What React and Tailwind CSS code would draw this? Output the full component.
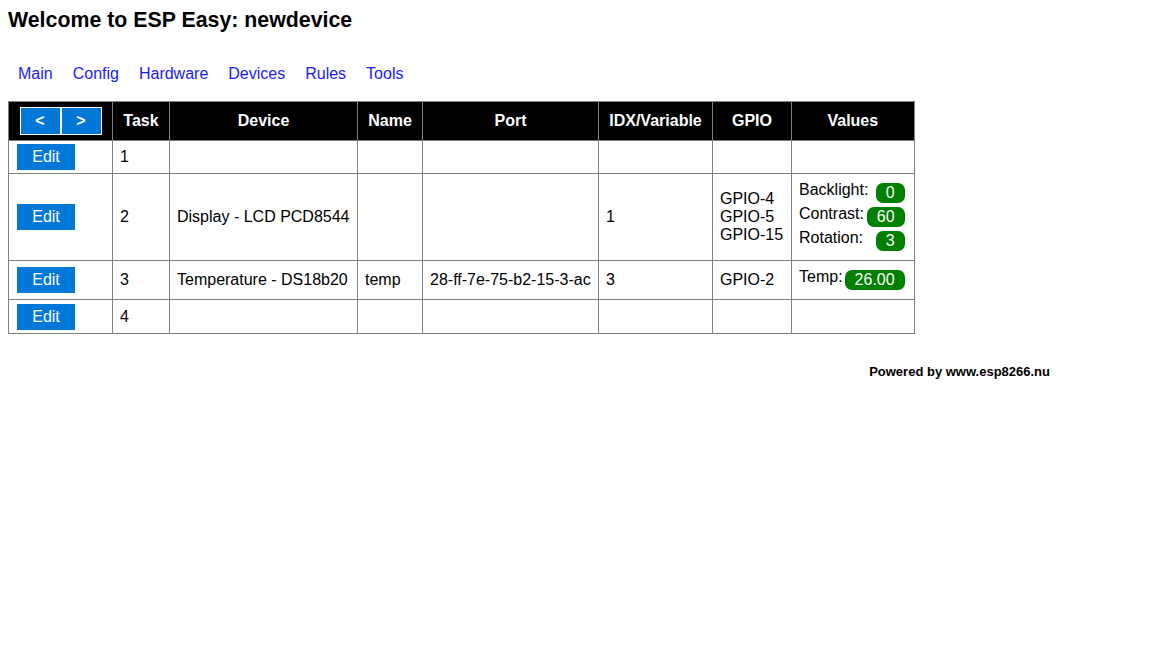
import React from 'react';

const navItems = ['Main', 'Config', 'Hardware', 'Devices', 'Rules', 'Tools'];

const colWidths = [104, 57, 188, 65, 176, 114, 79, 122];

const headers = ['Task', 'Device', 'Name', 'Port', 'IDX/Variable', 'GPIO', 'Values'];

const tasks = [
  { task: 1, height: 'h-[33px]' },
  {
    task: 2,
    height: 'h-[87px]',
    device: 'Display - LCD PCD8544',
    idx: '1',
    gpio: ['GPIO-4', 'GPIO-5', 'GPIO-15'],
    values: [
      ['Backlight:', '0'],
      ['Contrast:', '60'],
      ['Rotation:', '3'],
    ],
  },
  {
    task: 3,
    height: 'h-[39px]',
    device: 'Temperature - DS18b20',
    name: 'temp',
    port: '28-ff-7e-75-b2-15-3-ac',
    idx: '3',
    gpio: ['GPIO-2'],
    values: [['Temp:', '26.00']],
  },
  { task: 4, height: 'h-[34px]' },
];

const Cell = ({ children }) => (
  <td className="whitespace-nowrap border border-[#808080] pl-[7px] pr-[7px] align-middle leading-[18px]">{children}</td>
);

const ValueLine = ({ label, value }) => (
  <div className="flex items-start justify-between">
    <span className="leading-[18px]">{label}</span>
    <span className="m-0.5 rounded-[7px] bg-[#008000] px-2.5 py-px leading-[18px] text-white">{value}</span>
  </div>
);

export default function App() {
  return (
    <div className="min-h-screen bg-white px-2 pt-[7px] text-[16px] text-black" style={{ fontFamily: '"Liberation Sans", Arial, sans-serif' }}>
      <h1 className="text-[21.33px] font-bold leading-[26px]">Welcome to ESP Easy: newdevice</h1>

      <nav className="mt-[32px] flex leading-[18px]">
        {navItems.map((item) => (
          <a key={item} href="#" className="px-[10px] text-[#1a1aff]">
            {item}
          </a>
        ))}
      </nav>

      <table className="mt-[18px] table-fixed border-collapse border border-[#808080]">
        <colgroup>
          {colWidths.map((w, i) => (
            <col key={i} style={{ width: w }} />
          ))}
        </colgroup>
        <thead>
          <tr className="h-[39px] bg-black text-white">
            <th className="border border-[#808080] align-middle">
              <div className="flex justify-center">
                <button className="h-[28px] w-[41px] border border-white bg-[#0078d7] font-bold text-white">&lt;</button>
                <button className="h-[28px] w-[41px] border border-white bg-[#0078d7] font-bold text-white">&gt;</button>
              </div>
            </th>
            {headers.map((h) => (
              <th key={h} className="whitespace-nowrap border border-[#808080] text-center font-bold">
                {h}
              </th>
            ))}
          </tr>
        </thead>
        <tbody>
          {tasks.map((t) => (
            <tr key={t.task} className={t.height}>
              <td className="border border-[#808080] pl-[8px] align-middle">
                <button className="h-[26px] w-[58px] bg-[#0078d7] text-white">Edit</button>
              </td>
              <Cell>{t.task}</Cell>
              <Cell>{t.device}</Cell>
              <Cell>{t.name}</Cell>
              <Cell>{t.port}</Cell>
              <Cell>{t.idx}</Cell>
              <Cell>
                {t.gpio &&
                  t.gpio.map((g) => (
                    <div key={g}>{g}</div>
                  ))}
              </Cell>
              <Cell>
                {t.values &&
                  t.values.map(([label, value]) => <ValueLine key={label} label={label} value={value} />)}
              </Cell>
            </tr>
          ))}
        </tbody>
      </table>

      <div className="mt-[30px] w-[1042px] text-right text-[13px] font-bold leading-[16px]">Powered by www.esp8266.nu</div>
    </div>
  );
}
